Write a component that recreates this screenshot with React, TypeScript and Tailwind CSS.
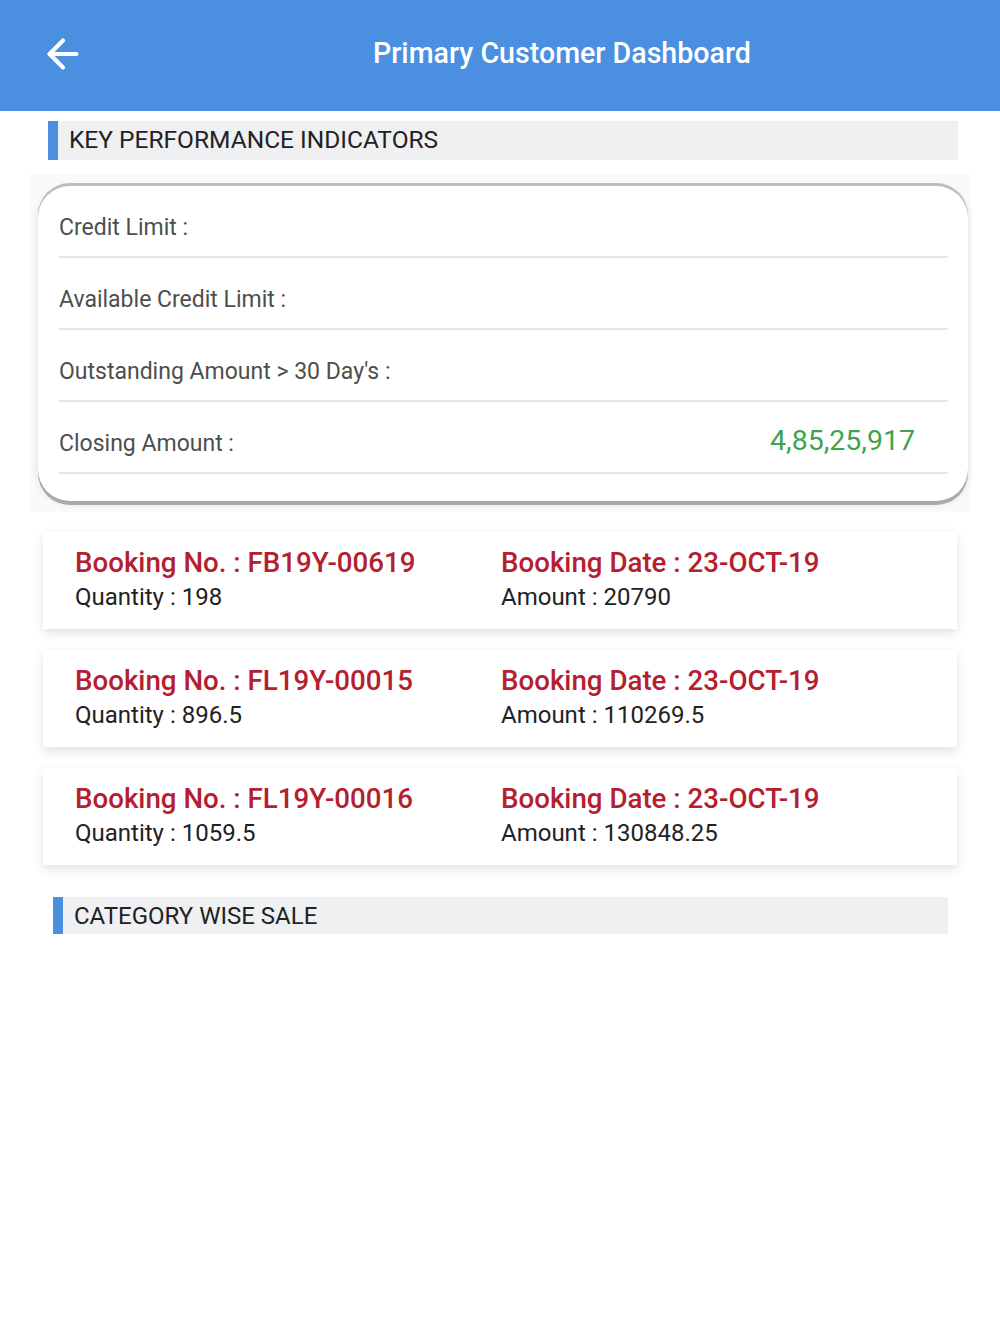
import { ArrowLeft } from "lucide-react";

const kpis = [
  { label: "Credit Limit :", value: "" },
  { label: "Available Credit Limit :", value: "" },
  { label: "Outstanding Amount > 30 Day's :", value: "" },
  { label: "Closing Amount :", value: "4,85,25,917" },
];

const bookings = [
  { no: "FB19Y-00619", date: "23-OCT-19", qty: "198", amount: "20790" },
  { no: "FL19Y-00015", date: "23-OCT-19", qty: "896.5", amount: "110269.5" },
  { no: "FL19Y-00016", date: "23-OCT-19", qty: "1059.5", amount: "130848.25" },
];

function SectionTitle({ title, className, size }: { title: string; className: string; size: string }) {
  return (
    <div className={"flex items-stretch bg-[#eff0f2] " + className}>
      <div className="w-[10px] bg-[#4a8fe0]" />
      <div className={"pl-[11px] leading-[38px] text-[#222] " + size}>{title}</div>
    </div>
  );
}

export default function App() {
  return (
    <div className="w-[1000px] min-h-[1334px] bg-white font-['Roboto',sans-serif]">
      <div className="h-[111px] bg-[#4a8fe0] flex items-center relative">
        <ArrowLeft className="absolute left-[40px] top-[31px] text-white" size={46} strokeWidth={2.2} />
        <div className="ml-[373px] -mt-[4px] text-white text-[28.6px] font-medium">
          Primary Customer Dashboard
        </div>
      </div>

      <SectionTitle
        title="KEY PERFORMANCE INDICATORS"
        size="text-[24.5px]"
        className="mt-[10px] ml-[48px] w-[910px] h-[39px]"
      />

      <div className="mt-[14px] ml-[30px] mr-[30px] pt-[12px] pb-[11px] pl-[8px] pr-[2px] bg-[#fafafa]">
        <div className="rounded-[32px] bg-white pr-[20px] pl-[21px] pb-[27px] shadow-[0_-3px_0_#bdbdbd,0_4px_0_#a9a9a9,0_2px_8px_rgba(0,0,0,0.12)]">
          {kpis.map((k) => (
            <div
              key={k.label}
              className="h-[72px] border-b-2 border-[#e6e6e6] flex items-center justify-between pt-[14px]"
            >
              <span className="text-[23px] text-[#4e4e4e]">{k.label}</span>
              {k.value && (
                <span className="text-[28.5px] text-[#3ea44b] mr-[33px] -mt-[6px]">{k.value}</span>
              )}
            </div>
          ))}
        </div>
      </div>

      <div className="mt-[20px] mx-[43px] flex flex-col gap-[21px]">
        {bookings.map((b) => (
          <div
            key={b.no}
            className="h-[97px] bg-white shadow-[0_4px_10px_rgba(0,0,0,0.12)] flex pl-[32px] pt-[13px]"
          >
            <div className="w-[426px]">
              <div className="text-[27.7px] font-medium text-[#b5202e] leading-[35px]">Booking No. : {b.no}</div>
              <div className="text-[24px] text-[#222] leading-[35px]">Quantity : {b.qty}</div>
            </div>
            <div>
              <div className="text-[27.7px] font-medium text-[#b5202e] leading-[35px]">Booking Date : {b.date}</div>
              <div className="text-[24px] text-[#222] leading-[35px]">Amount : {b.amount}</div>
            </div>
          </div>
        ))}
      </div>

      <SectionTitle
        title="CATEGORY WISE SALE"
        size="text-[24px]"
        className="mt-[32px] ml-[53px] w-[895px] h-[37px]"
      />
    </div>
  );
}
